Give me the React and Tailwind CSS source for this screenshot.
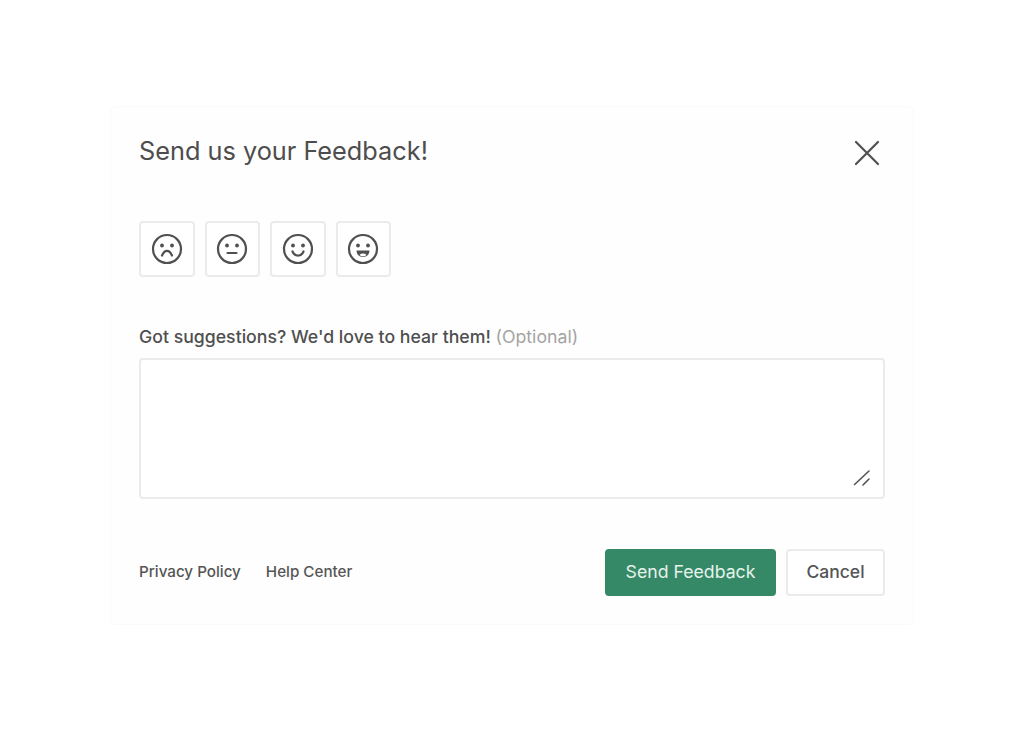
const faceMouths = {
  sad: <path d="M11 22.500c1.400-3.200 3.200-4.600 5-4.600s3.600 1.400 5 4.600" />,
  neutral: <path d="M11.500 20h9" />,
  happy: <path d="M10.500 18.500c1.100 2.900 3 4.200 5.500 4.200s4.400-1.300 5.500-4.200" />,
};

function Face({ mood }) {
  return (
    <button className="w-[55.5px] h-[55.5px] bg-white border-2 border-[#ebebeb] rounded-[4px] flex items-center justify-center">
      <svg width="32" height="32" viewBox="0 0 32 32" fill="none" stroke="#505050" strokeWidth="2.2" strokeLinecap="round">
        <circle cx="16" cy="16" r="14" />
        <circle cx="11" cy="12.500" r="1.900" fill="#505050" stroke="none" />
        <circle cx="21" cy="12.500" r="1.900" fill="#505050" stroke="none" />
        {mood === 'excited' ? (
          <>
            <path d="M9.500 17.500h13c0 4-2.800 6.500-6.500 6.500s-6.500-2.500-6.500-6.500z" fill="#505050" stroke="none" />
            <path d="M12.500 21.800c1-.8 2.200-1.200 3.500-1.200s2.500.4 3.500 1.200c-.9 1-2.100 1.500-3.500 1.500s-2.600-.5-3.500-1.500z" fill="#fff" stroke="none" />
          </>
        ) : (
          faceMouths[mood]
        )}
      </svg>
    </button>
  );
}

export default function App() {
  return (
    <div className="min-h-screen bg-white flex items-center justify-center font-['Inter',sans-serif]">
      <div className="w-[804px] h-[519px] bg-[#fefefe] border border-[#fafafa] rounded-[6px] px-[28px] flex flex-col">
        <div className="flex justify-between items-start pt-[27px] pr-[4px]">
          <h1 className="text-[25.3px] leading-[34px] text-[#4d4d4d] font-normal">Send us your Feedback!</h1>
          <svg className="mt-[5px]" width="28" height="28" viewBox="0 0 28 28" fill="none" stroke="#505050" strokeWidth="2.2" strokeLinecap="round">
            <path d="M3 3l22 22M25 3L3 25" />
          </svg>
        </div>

        <div className="flex gap-[10px] mt-[53px]">
          <Face mood="sad" />
          <Face mood="neutral" />
          <Face mood="happy" />
          <Face mood="excited" />
        </div>

        <p className="mt-[48px] text-[17.7px] leading-[24px] font-medium text-[#4f4f4f]">
          Got suggestions? We'd love to hear them! <span className="font-normal text-[#a3a3a3]">(Optional)</span>
        </p>

        <div className="mt-[9px] h-[141px] bg-white border-2 border-[#ebebeb] rounded-[4px] flex items-end justify-end pr-[12px] pb-[10px]">
          <svg width="18" height="18" viewBox="0 0 18 18" fill="none" stroke="#555" strokeWidth="1.6" strokeLinecap="round">
            <path d="M1.500 15.500L16 2M10 16l6-6" />
          </svg>
        </div>

        <div className="mt-[50px] flex items-center justify-between">
          <div className="flex gap-[25px] text-[15.2px] font-medium text-[#555]">
            <a>Privacy Policy</a>
            <a>Help Center</a>
          </div>
          <div className="flex gap-[10px]">
            <button className="w-[171px] h-[47px] bg-[#358966] rounded-[4px] text-[17.7px] text-[#e6f2ec]">Send Feedback</button>
            <button className="w-[99px] h-[47px] bg-white border-2 border-[#ebebeb] rounded-[4px] text-[17.5px] font-medium text-[#555]">Cancel</button>
          </div>
        </div>
      </div>
    </div>
  );
}
